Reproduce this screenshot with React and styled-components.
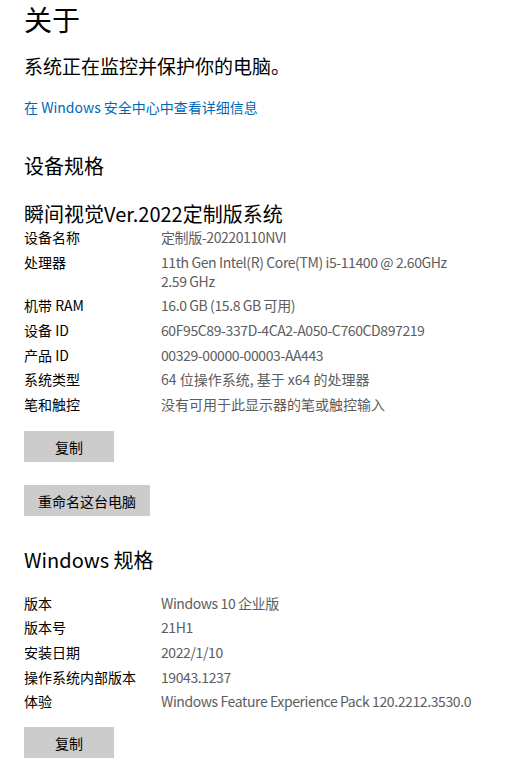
import React from 'react';
import styled, { createGlobalStyle } from 'styled-components';

const GlobalStyle = createGlobalStyle`
  body {
    margin: 0;
    background: #fff;
    font-family: "Noto Sans CJK SC", "Noto Sans", sans-serif;
    color: #000;
  }
`;

const Page = styled.div`
  width: 527px;
  padding: 0 24px;
  box-sizing: border-box;
`;

const Title = styled.h1`
  margin: 0;
  font-size: 28px;
  font-weight: 400;
  line-height: 38px;
`;

const Lead = styled.p`
  margin: 15px 0 0;
  font-size: 19px;
  line-height: 26px;
`;

const Link = styled.a`
  display: block;
  margin-top: 18px;
  font-size: 14px;
  line-height: 20px;
  color: #0067b8;
  text-decoration: none;
`;

const SectionTitle = styled.h2`
  margin: ${p => p.$top || 35}px 0 0;
  font-size: 20px;
  font-weight: 400;
  line-height: 28px;
`;

const DeviceName = styled.div`
  margin-top: 20px;
  font-size: 20px;
  line-height: 28px;
`;

const SpecList = styled.dl`
  margin: ${p => p.$top || 0}px 0 0;
  display: grid;
  grid-template-columns: 137px 1fr;
  row-gap: 5.7px;
  font-size: 14px;
  line-height: 19px;
`;

const Label = styled.dt`
  margin: 0;
  color: #000;
`;

const Value = styled.dd`
  margin: 0;
  color: #5d5d5d;
  letter-spacing: ${p => (p.$latin ? '-0.4px' : '0')};
`;

const Button = styled.button`
  display: block;
  min-width: 90px;
  height: 31px;
  margin-top: ${p => p.$top || 0}px;
  padding: 0 14px;
  border: none;
  background: #cccccc;
  color: #000;
  font-family: inherit;
  font-size: 14px;
`;

const deviceSpecs = [
  ['设备名称', '定制版-20220110NVI'],
  ['处理器', '11th Gen Intel(R) Core(TM) i5-11400 @ 2.60GHz\n2.59 GHz'],
  ['机带 RAM', '16.0 GB (15.8 GB 可用)'],
  ['设备 ID', '60F95C89-337D-4CA2-A050-C760CD897219'],
  ['产品 ID', '00329-00000-00003-AA443'],
  ['系统类型', '64 位操作系统, 基于 x64 的处理器'],
  ['笔和触控', '没有可用于此显示器的笔或触控输入'],
];

const windowsSpecs = [
  ['版本', 'Windows 10 企业版'],
  ['版本号', '21H1'],
  ['安装日期', '2022/1/10'],
  ['操作系统内部版本', '19043.1237'],
  ['体验', 'Windows Feature Experience Pack 120.2212.3530.0'],
];

const hasLatin = s => /[A-Za-z0-9]{2,}/.test(s);

function Specs({ items, top }) {
  return (
    <SpecList $top={top}>
      {items.map(([k, v]) => (
        <React.Fragment key={k}>
          <Label>{k}</Label>
          <Value $latin={hasLatin(v) && !v.startsWith('64')}>
            {v.split('\n').map((line, i) => (
              <React.Fragment key={i}>
                {i > 0 && <br />}
                {line}
              </React.Fragment>
            ))}
          </Value>
        </React.Fragment>
      ))}
    </SpecList>
  );
}

export default function App() {
  return (
    <Page>
      <GlobalStyle />
      <Title>关于</Title>
      <Lead>系统正在监控并保护你的电脑。</Lead>
      <Link href="#">在 Windows 安全中心中查看详细信息</Link>

      <SectionTitle>设备规格</SectionTitle>
      <DeviceName>瞬间视觉Ver.2022定制版系统</DeviceName>
      <Specs items={deviceSpecs} />
      <Button $top={17}>复制</Button>
      <Button $top={23}>重命名这台电脑</Button>

      <SectionTitle $top={30}>Windows 规格</SectionTitle>
      <Specs items={windowsSpecs} top={19.5} />
      <Button $top={15.7}>复制</Button>
    </Page>
  );
}
